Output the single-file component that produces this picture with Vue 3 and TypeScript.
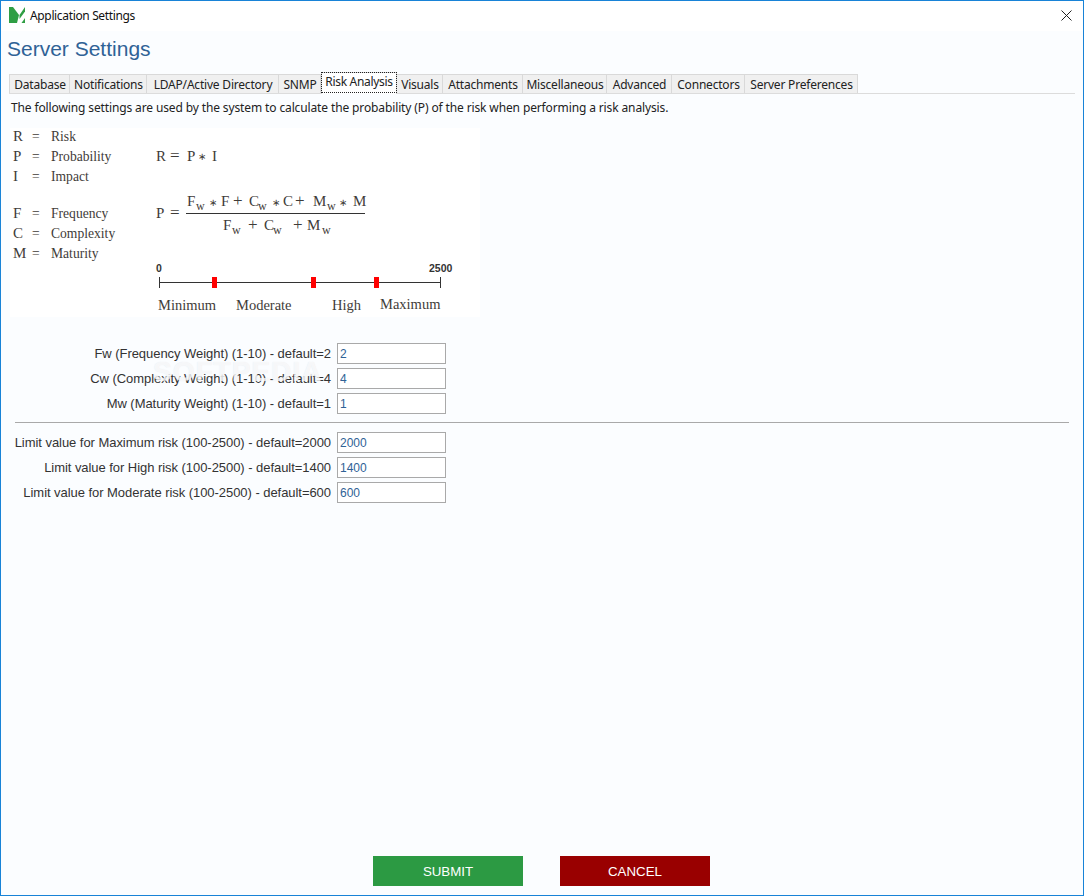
<script setup lang="ts">
interface Field { label: string; value: string }
const tabs: string[] = ['Database','Notifications','LDAP/Active Directory','SNMP','Risk Analysis','Visuals','Attachments','Miscellaneous','Advanced','Connectors','Server Preferences']
const weights: Field[] = [
  { label: 'Fw (Frequency Weight) (1-10) - default=2', value: '2' },
  { label: 'Cw (Complexity Weight) (1-10) - default=4', value: '4' },
  { label: 'Mw (Maturity Weight) (1-10) - default=1', value: '1' },
]
const limits: Field[] = [
  { label: 'Limit value for Maximum risk (100-2500) - default=2000', value: '2000' },
  { label: 'Limit value for High risk (100-2500) - default=1400', value: '1400' },
  { label: 'Limit value for Moderate risk (100-2500) - default=600', value: '600' },
]
const legend = [
  { s: 'R', n: 'Risk', y: 141 }, { s: 'P', n: 'Probability', y: 161 }, { s: 'I', n: 'Impact', y: 181 },
  { s: 'F', n: 'Frequency', y: 218 }, { s: 'C', n: 'Complexity', y: 238 }, { s: 'M', n: 'Maturity', y: 258 },
]
const top = [
  ['F',187,'big'],['∗',209,'ast'],['F',221,'big'],['+',233,'op'],['C',249,'big'],['∗',272,'ast'],['C',283,'big'],['+',295,'op'],['M',313,'big'],['∗',339,'ast'],['M',353,'big'],
] as [string, number, string][]
const bottom = [['F',223,'big'],['+',248,'op'],['C',264,'big'],['+',293,'op'],['M',307,'big']] as [string, number, string][]
const topSubs = [196, 258, 327]
const bottomSubs = [232, 273, 322]
const markers = [212, 311, 374]
</script>

<template>
  <div class="window">
    <header class="titlebar">
      <svg class="logo" viewBox="0 0 17 17" width="17" height="17">
        <path d="M0 0L4 0L10 8L8 16L0 16Z" fill="#2f9e44" />
        <path d="M10.5 8L16 0L16 4.5L10.5 12Z" fill="#2f9e44" />
        <path d="M12.5 16L16 11L16 16Z" fill="#2f9e44" />
      </svg>
      <span class="app-title">Application Settings</span>
      <svg class="close" viewBox="0 0 11 11" width="11" height="11">
        <path d="M0.5 0.5L10.5 10.5M10.5 0.5L0.5 10.5" stroke="#222" stroke-width="1" fill="none" />
      </svg>
    </header>

    <main class="content">
      <h1 class="heading">Server Settings</h1>
      <nav class="tabs">
        <div v-for="t in tabs" :key="t" class="tab" :class="{ active: t === 'Risk Analysis' }">
          <span class="tab-label">{{ t }}</span>
        </div>
      </nav>
      <p class="intro">The following settings are used by the system to calculate the probability (P) of the risk when performing a risk analysis.</p>

      <svg class="diagram" viewBox="10 128 470 189" width="470" height="189">
        <rect x="10" y="128" width="470" height="189" fill="#fff" />
        <g v-for="l in legend" :key="l.s" class="dtext">
          <text x="13" :y="l.y" class="big">{{ l.s }}</text>
          <text x="32" :y="l.y" class="small">=</text>
          <text x="51" :y="l.y" class="small">{{ l.n }}</text>
        </g>
        <text x="156" y="161" class="dtext big">R</text>
        <text x="170" y="161" class="dtext op">=</text>
        <text x="187" y="161" class="dtext big">P</text>
        <text x="198" y="160" class="dtext ast">∗</text>
        <text x="212" y="161" class="dtext big">I</text>

        <text x="156" y="218" class="dtext big">P</text>
        <text x="170" y="218" class="dtext op">=</text>
        <text v-for="(c, i) in top" :key="'t' + i" :x="c[1]" y="206" class="dtext" :class="c[2]">{{ c[0] }}</text>
        <text v-for="x in topSubs" :key="'ts' + x" :x="x" y="210" class="dtext sub">w</text>
        <rect x="186" y="213" width="179" height="1" fill="#333" />
        <text v-for="(c, i) in bottom" :key="'b' + i" :x="c[1]" y="230" class="dtext" :class="c[2]">{{ c[0] }}</text>
        <text v-for="x in bottomSubs" :key="'bs' + x" :x="x" y="234" class="dtext sub">w</text>

        <text x="156" y="272" class="bold">0</text>
        <text x="429" y="272" class="bold">2500</text>
        <rect x="160" y="282" width="280" height="1" fill="#333" />
        <rect x="159" y="277" width="1" height="11" fill="#333" />
        <rect x="440" y="277" width="1" height="11" fill="#333" />
        <rect v-for="m in markers" :key="m" :x="m" y="277" width="5" height="11" fill="#f00" />

        <text x="158" y="310" class="dtext label">Minimum</text>
        <text x="236" y="310" class="dtext label">Moderate</text>
        <text x="332" y="310" class="dtext label">High</text>
        <text x="380" y="309" class="dtext label">Maximum</text>
      </svg>

      <section class="form">
        <div class="watermark">SOFTPEDIA</div>
        <div class="group">
          <label v-for="f in weights" :key="f.label" class="row">
            <span class="row-label">{{ f.label }}</span>
            <input class="field" :value="f.value" />
          </label>
        </div>
        <hr class="rule" />
        <div class="group">
          <label v-for="f in limits" :key="f.label" class="row">
            <span class="row-label">{{ f.label }}</span>
            <input class="field" :value="f.value" />
          </label>
        </div>
      </section>

      <footer class="actions">
        <button class="btn submit">SUBMIT</button>
        <button class="btn cancel">CANCEL</button>
      </footer>
    </main>
  </div>
</template>

<style scoped>
.window {
  box-sizing: border-box;
  width: 1084px;
  height: 896px;
  border: 1px solid #1883d7;
  display: flex;
  flex-direction: column;
  background: #fbfdff;
  overflow: hidden;
}
.titlebar {
  height: 30px;
  flex: none;
  background: #fff;
  display: flex;
  align-items: center;
  padding: 0 11px 0 8px;
  box-sizing: border-box;
}
.logo { flex: none; margin-top: -1px; }
.app-title {
  margin-left: 4px;
  font: 12px "Noto Sans", sans-serif;
  letter-spacing: -0.35px;
  color: #111;
  margin-top: -1px;
}
.close { margin-left: auto; margin-top: -1px; }
.content {
  flex: 1;
  display: flex;
  flex-direction: column;
  min-height: 0;
}
.heading {
  margin: 5px 0 0 6px;
  height: 36px;
  font: 400 21px/26px "Liberation Sans", sans-serif;
  color: #2f6296;
}
.tabs {
  margin: 0 8px 0 8px;
  height: 21px;
  display: grid;
  grid-template-columns: 61px 77px 132px 42px 76px 46px 80px 84px 65px 73px 113px;
  align-items: end;
  border-bottom: 1px solid #dcdcdc;
}
.tab {
  box-sizing: border-box;
  height: 19px;
  padding: 1px 0 0 1px;
  background: #f0f0f0;
  border: 1px solid #d9d9d9;
  border-bottom: 0;
  border-left-width: 0;
  display: flex;
  align-items: center;
  justify-content: center;
  font: 12px "Noto Sans", sans-serif;
  letter-spacing: -0.2px;
  color: #222;
  white-space: nowrap;
}
.tab:first-child { border-left-width: 1px; }
.tab.active {
  height: 22px;
  margin-bottom: -1px;
  padding: 0;
  background: #fff;
  border: 1px solid #d9d9d9;
  border-bottom: 0;
  align-items: flex-start;
  letter-spacing: -0.3px;
}
.tab.active .tab-label {
  outline: 1px dotted #222;
  outline-offset: 0;
  padding: 1px 3px 2px;
  line-height: 16px;
}
.intro {
  margin: 6px 0 0 10px;
  font: 12px/16px "Noto Sans", sans-serif;
  letter-spacing: -0.125px;
  color: #222;
}
.diagram {
  display: block;
  flex: none;
  margin: 12px 0 0 9px;
}
.dtext { fill: #3f3c39; font-family: "Liberation Serif", serif; }
.big { font-size: 15px; }
.op { font-size: 17px; }
.ast { font-size: 10px; }
.small { font-size: 13.6px; }
.sub { font-size: 12px; }
.label { font-size: 14.5px; }
.bold { font: 700 10.5px "Liberation Sans", sans-serif; fill: #333; }
.form {
  position: relative;
  margin-top: 26px;
  display: flex;
  flex-direction: column;
}
.group {
  display: flex;
  flex-direction: column;
  gap: 4px;
}
.row {
  display: flex;
  align-items: center;
  height: 21px;
}
.row-label {
  box-sizing: border-box;
  width: 330px;
  text-align: right;
  font: 13px "Liberation Sans", sans-serif;
  letter-spacing: -0.05px;
  color: #333;
  white-space: nowrap;
}
.field {
  box-sizing: border-box;
  margin: 0 0 0 6px;
  width: 109px;
  height: 21px;
  border: 1px solid #a9a9a9;
  background: #fff;
  padding: 0 2px;
  font: 12px "Liberation Sans", sans-serif;
  color: #2f6296;
  outline: none;
  border-radius: 0;
}
.rule {
  margin: 8px 14px 9px 14px;
  border: 0;
  border-top: 1px solid #a9a9a9;
  height: 0;
}
.watermark {
  position: absolute;
  left: 152px;
  top: 13px;
  font: 700 28px "Liberation Sans", sans-serif;
  letter-spacing: 1px;
  color: rgba(255, 255, 255, 0.7);
  text-shadow: 0 0 1px rgba(200, 205, 212, 0.45);
  pointer-events: none;
  z-index: 1;
}
.actions {
  margin-top: auto;
  padding: 0 0 9px 372px;
  display: flex;
  gap: 37px;
}
.btn {
  width: 150px;
  height: 30px;
  border: 0;
  padding: 0;
  color: #fff;
  font: 13.3px "Liberation Sans", sans-serif;
}
.submit { background: #2c9a43; }
.cancel { background: #990000; }
</style>
